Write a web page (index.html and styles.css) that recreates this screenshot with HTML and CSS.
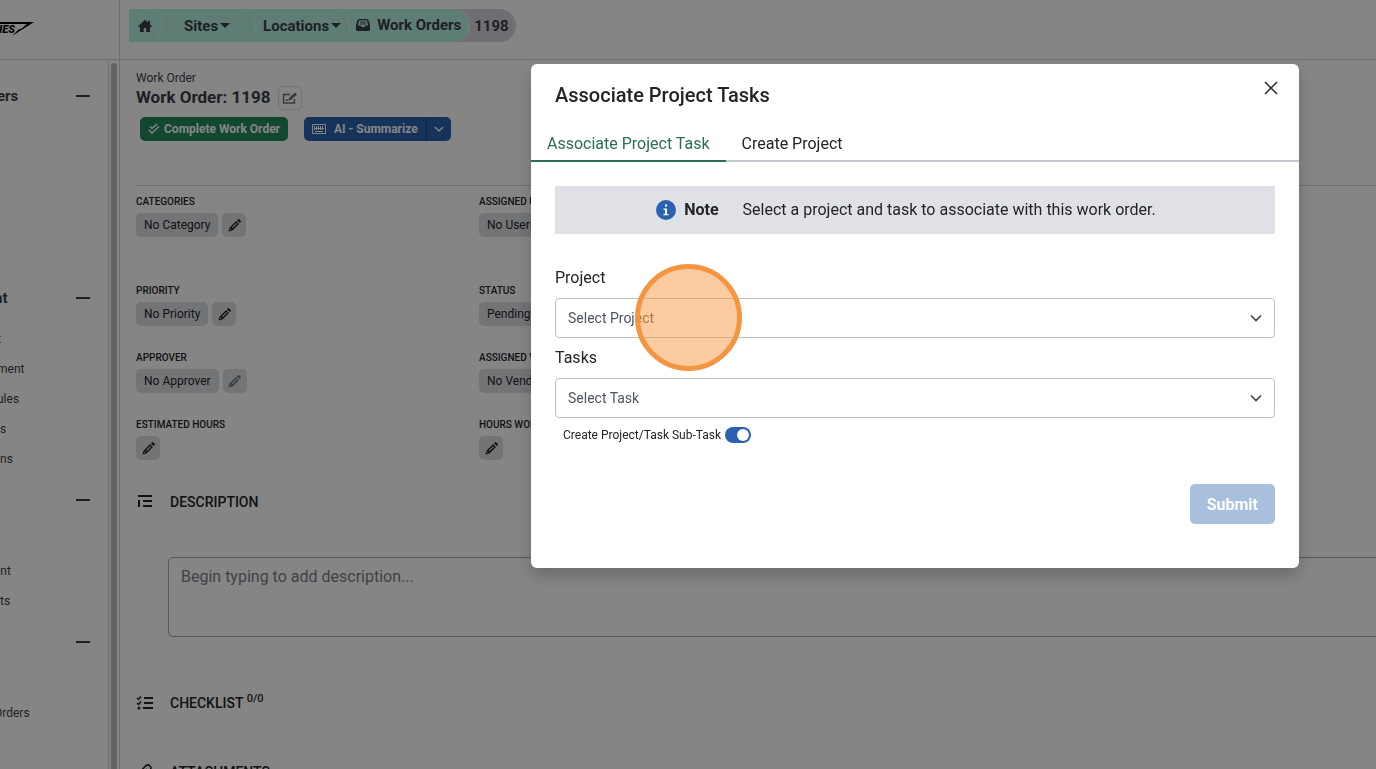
FILE: index.html
```html
<!DOCTYPE html>
<html lang="en">
<head>
  <meta charset="utf-8">
  <title>Work Order: 1198</title>
  <link rel="stylesheet" href="styles.css">
</head>
<body>
  <!-- shared icons -->
  <svg class="sprite" aria-hidden="true">
    <symbol id="pencil" viewBox="0 0 16 16">
      <path fill="currentColor" fill-rule="evenodd" d="M11 1.500l1.200-1.200a1 1 0 0 1 1.400 0l2.100 2.100a1 1 0 0 1 0 1.400L14.500 5zM10 2.500L13.500 6l-8 8L.5 15.500 2 10.500zM10.200 4.800L4.800 10.200l1 1 5.400-5.400zM3 11.800l-.7 1.900 1.900-.7z"/>
    </symbol>
    <symbol id="chevron" viewBox="0 0 12 12">
      <path fill="none" stroke="currentColor" stroke-width="1.600" d="M1 3.500l5 5 5-5"/>
    </symbol>
  </svg>

  <div class="app">
    <aside class="sidebar">
      <div class="logo">
        <svg width="36" height="18" viewBox="0 0 36 18">
          <path d="M0 2h34L12 16l7-7h2l6-5H0z"/>
          <text x="-8" y="13">RIES</text>
        </svg>
      </div>
      <div class="sidebar-body">
        <nav>
          <section>
            <div class="group-head"><h3 class="cut">ers</h3><button class="collapse" aria-label="Collapse"></button></div>
            <ul><li></li><li></li><li></li><li></li><li></li></ul>
          </section>
          <section>
            <div class="group-head"><h3 class="cut wide">nt</h3><button class="collapse" aria-label="Collapse"></button></div>
            <ul>
              <li><a href="#" class="cut">t</a></li>
              <li><a href="#" class="cut">ment</a></li>
              <li><a href="#" class="cut">ules</a></li>
              <li><a href="#">s</a></li>
              <li><a href="#">ns</a></li>
            </ul>
          </section>
          <section>
            <div class="group-head"><h3></h3><button class="collapse" aria-label="Collapse"></button></div>
            <ul>
              <li></li>
              <li><a href="#" class="cut wide">ent</a></li>
              <li><a href="#">ts</a></li>
            </ul>
          </section>
          <section>
            <div class="group-head"><h3></h3><button class="collapse" aria-label="Collapse"></button></div>
            <ul>
              <li></li>
              <li><a href="#" class="cut wide">Orders</a></li>
            </ul>
          </section>
        </nav>
        <div class="scrollbar"><div class="thumb"></div></div>
      </div>
    </aside>

    <div class="page">
      <header class="topbar">
        <nav class="breadcrumb">
          <a href="#" class="crumb home" aria-label="Home">
            <svg width="14" height="14" viewBox="0 0 14 14"><path fill="currentColor" d="M7 .8L0 7.200l1 1 1-.8V13h3.800V9h2.400v4H12V7.400l1 .8 1-1-2-1.900V1.800h-1.800v1.800z"/></svg>
          </a>
          <a href="#" class="crumb sites">Sites <span class="caret"></span></a>
          <a href="#" class="crumb locations">Locations <span class="caret"></span></a>
          <a href="#" class="crumb orders">
            <svg width="14" height="12" viewBox="0 0 14 12"><path fill="currentColor" fill-rule="evenodd" d="M3 0h8l1.500 1L14 6v5l-1 1H1l-1-1V6l1.500-5zM3.200 1.300L1.800 6.500H4.500L5.500 8h3l1-1.500h2.700l-1.400-5.200zM4.200 2.500h5.600v1H4.200zM3.800 4.500h6.400v1H3.800z"/></svg>
            Work Orders
          </a>
          <span class="crumb current">1198</span>
        </nav>
      </header>

      <main class="content">
        <div class="eyebrow">Work Order</div>
        <div class="title-row">
          <h1>Work Order: 1198</h1>
          <button class="edit-title" aria-label="Edit title">
            <svg width="16" height="14" viewBox="0 0 16 14"><path fill="none" stroke="currentColor" stroke-width="1.500" d="M8 3.500H1.500v8.500h11V8M3.500 9h3"/><path fill="currentColor" d="M6.500 9.500l.5-2.500L13 1.500l2 2L9 9z"/></svg>
          </button>
        </div>
        <div class="actions">
          <button class="btn complete">
            <svg width="12" height="12" viewBox="0 0 12 12"><path fill="none" stroke="currentColor" stroke-width="1.400" d="M2 3.500l2 2L9 1M1 7l3 3 7-6.500"/></svg>
            Complete Work Order
          </button>
          <div class="split">
            <button class="btn summarize">
              <svg width="14" height="10" viewBox="0 0 14 10"><path fill="none" stroke="currentColor" d="M.5.5h13v9H.5zM2.500 2v4M4.500 2v4M6.500 2v4M8.500 2v4M10.500 2v4M2 4.500h10M3 7.500h8"/></svg>
              AI - Summarize
            </button>
            <button class="btn more" aria-label="More actions"><svg width="10" height="10"><use href="#chevron"/></svg></button>
          </div>
        </div>

        <div class="fields">
          <div class="field tall">
            <h4>CATEGORIES</h4>
            <div class="chips"><span class="chip">No Category</span><button class="chip edit" aria-label="Edit categories"><svg width="13" height="13"><use href="#pencil"/></svg></button></div>
          </div>
          <div class="field tall">
            <h4>ASSIGNED USERS</h4>
            <div class="chips"><span class="chip">No Users</span></div>
          </div>
          <div class="field">
            <h4>PRIORITY</h4>
            <div class="chips"><span class="chip">No Priority</span><button class="chip edit" aria-label="Edit priority"><svg width="13" height="13"><use href="#pencil"/></svg></button></div>
          </div>
          <div class="field">
            <h4>STATUS</h4>
            <div class="chips"><span class="chip">Pending</span></div>
          </div>
          <div class="field">
            <h4>APPROVER</h4>
            <div class="chips"><span class="chip">No Approver</span><button class="chip edit muted" aria-label="Edit approver"><svg width="13" height="13"><use href="#pencil"/></svg></button></div>
          </div>
          <div class="field">
            <h4>ASSIGNED VENDOR</h4>
            <div class="chips"><span class="chip">No Vendor</span></div>
          </div>
          <div class="field">
            <h4>ESTIMATED HOURS</h4>
            <div class="chips"><button class="chip edit" aria-label="Edit estimated hours"><svg width="13" height="13"><use href="#pencil"/></svg></button></div>
          </div>
          <div class="field">
            <h4>HOURS WORKED</h4>
            <div class="chips"><button class="chip edit" aria-label="Edit hours worked"><svg width="13" height="13"><use href="#pencil"/></svg></button></div>
          </div>
        </div>

        <h2 class="section-title">
          <svg width="18" height="16" viewBox="0 0 18 16"><path fill="none" stroke="currentColor" stroke-width="2" d="M2 2h14M7 7h9M7 12h9M3 6v7"/></svg>
          <label for="description">DESCRIPTION</label>
        </h2>
        <textarea id="description" class="description" placeholder="Begin typing to add description..."></textarea>

        <h2 class="section-title">
          <svg width="18" height="16" viewBox="0 0 18 16"><path fill="none" stroke="currentColor" stroke-width="2" d="M8 3h9M8 8h9M7 13h10"/><path fill="none" stroke="currentColor" stroke-width="1.500" d="M1 3l1.500 1.500L5 1.500M1 8l1.500 1.500L5 6.500"/><circle fill="currentColor" cx="3" cy="13" r="1.500"/></svg>
          <span>CHECKLIST <sup>0/0</sup></span>
        </h2>
        <h2 class="section-title">
          <svg width="18" height="16" viewBox="0 0 18 16"><path fill="none" stroke="currentColor" stroke-width="1.600" d="M11 5L6 10.500a1.500 1.500 0 0 0 2 2L14 6a3 3 0 0 0-4.500-4L3.500 8.500a4.500 4.500 0 0 0 6 6"/></svg>
          <span>ATTACHMENTS</span>
        </h2>
      </main>
    </div>
  </div>

  <div class="backdrop">
    <div class="modal" role="dialog" aria-labelledby="modalTitle">
      <div class="modal-header">
        <h2 id="modalTitle">Associate Project Tasks</h2>
        <button class="close" aria-label="Close">
          <svg width="14" height="14" viewBox="0 0 14 14"><path fill="none" stroke="currentColor" stroke-width="1.500" d="M1 1l12 12M13 1L1 13"/></svg>
        </button>
      </div>
      <div class="tabs">
        <button class="tab active">Associate Project Task</button>
        <button class="tab">Create Project</button>
      </div>
      <form class="modal-body">
        <div class="note">
          <svg width="20" height="20" viewBox="0 0 20 20"><circle cx="10" cy="10" r="10" fill="#2b62b0"/><path fill="#fff" d="M9 4.500h2v2H9zM7.500 8.500H11V14h1.500v1.200h-5V14H9V9.700H7.500z"/></svg>
          <strong>Note</strong>
          <span>Select a project and task to associate with this work order.</span>
        </div>

        <label for="project">Project</label>
        <div class="select">
          <select id="project"><option>Select Project</option></select>
          <svg width="12" height="12"><use href="#chevron"/></svg>
          <div class="click-marker"></div>
        </div>

        <label for="task">Tasks</label>
        <div class="select">
          <select id="task"><option>Select Task</option></select>
          <svg width="12" height="12"><use href="#chevron"/></svg>
        </div>

        <div class="switch-row">
          <label for="subtask">Create Project/Task Sub-Task</label>
          <input type="checkbox" id="subtask" class="switch" checked>
        </div>

        <div class="modal-footer">
          <button type="submit" class="submit" disabled>Submit</button>
        </div>
      </form>
    </div>
  </div>
</body>
</html>
```
FILE: styles.css
```css
:root {
  --text: #212529;
  --page-text: #3c3f48;
  --green: #2c6e51;
  --blue: #2b62b0;
  --border: #c1c7cd;
  --chip: #dcdee2;
  --font: Roboto, "Liberation Sans", sans-serif;
}

* {
  margin: 0;
  padding: 0;
  box-sizing: border-box;
}

body {
  font-family: var(--font);
  font-size: 16px;
  line-height: 24px;
  color: var(--text);
  background: #fff;
  overflow: hidden;
}

button, select, textarea {
  font-family: inherit;
  color: inherit;
}

button {
  border: none;
  background: none;
  cursor: pointer;
}

a {
  color: inherit;
  text-decoration: none;
}

ul {
  list-style: none;
}

svg {
  display: block;
  flex: none;
}

.sprite {
  display: none;
}

.app {
  display: flex;
  height: 100vh;
  overflow: hidden;
}

/* Sidebar */
.sidebar {
  display: flex;
  flex-direction: column;
  width: 120px;
  flex: none;
  border-right: 1px solid #d2d4d8;
}

.logo {
  height: 60px;
  padding-top: 20px;
  border-bottom: 1px solid #d2d4d8;
}

.logo text {
  font-size: 11px;
  font-weight: 900;
  font-style: italic;
}

.sidebar-body {
  display: flex;
  flex: 1;
  color: var(--page-text);
  overflow: hidden;
}

.sidebar nav {
  flex: 1;
  padding-top: 10px;
  overflow: hidden;
}

.group-head {
  display: flex;
  align-items: center;
  justify-content: space-between;
  height: 52px;
  padding-right: 18px;
}

.group-head h3 {
  font-size: 15px;
  font-weight: 700;
}

.cut {
  margin-left: -3px;
}

.cut.wide {
  margin-left: -6px;
}

.collapse {
  width: 14px;
  height: 2px;
  background: var(--page-text);
}

.sidebar li {
  height: 30px;
  font-size: 12px;
  line-height: 30px;
}

.scrollbar {
  width: 11px;
  padding: 3px 2px 0;
  border-left: 1px solid #d2d4d8;
}

.thumb {
  width: 6px;
  height: 100%;
  border-radius: 3px 3px 0 0;
  background: #bdbdbd;
}

/* Top bar */
.page {
  flex: 1;
  min-width: 0;
}

.topbar {
  height: 60px;
  padding: 9px 9px 0;
  border-bottom: 1px solid #d2d4d8;
}

.breadcrumb {
  display: flex;
  font-size: 15px;
  font-weight: 700;
  color: var(--page-text);
}

.crumb {
  position: relative;
  display: flex;
  align-items: center;
  gap: 2px;
  height: 33px;
  margin-left: -18px;
  border-right: 2px solid #d0f5ea;
  border-radius: 0 17px 17px 0;
  background: #b2efe0;
  white-space: nowrap;
}

.home {
  z-index: 4;
  margin-left: 0;
  padding: 0 9px;
}

.sites {
  z-index: 3;
  padding: 0 24px 0 39px;
}

.locations {
  z-index: 2;
  padding: 0 8px 0 25px;
}

.orders {
  z-index: 1;
  gap: 7px;
  padding: 0 7px 2px 23px;
}

.current {
  padding: 0 7px 0 22px;
  border: none;
  background: #d3d4dc;
}

.caret {
  border: 5px solid transparent;
  border-top-color: currentColor;
  border-bottom: none;
}

/* Work order */
.content {
  padding: 10px 0 0 16px;
}

.eyebrow {
  font-size: 12px;
  line-height: 16px;
  color: var(--page-text);
}

.title-row {
  display: flex;
  align-items: center;
  gap: 7px;
  height: 23px;
}

.title-row h1 {
  font-size: 17px;
  font-weight: 700;
  line-height: 23px;
  color: var(--page-text);
}

.edit-title {
  display: grid;
  place-items: center;
  width: 24px;
  height: 24px;
  border: 1px solid #dcdee2;
  border-radius: 5px;
  color: #697077;
}

.actions {
  display: flex;
  gap: 16px;
  padding: 8px 4px 44px;
  border-bottom: 1px solid #cfd1d5;
}

.btn {
  display: flex;
  align-items: center;
  gap: 4px;
  height: 24px;
  padding: 0 8px;
  border-radius: 5px;
  font-size: 12px;
  font-weight: 700;
  color: #fff;
}

.complete {
  background: #248a5a;
}

.split {
  display: flex;
}

.summarize {
  gap: 8px;
  border-radius: 5px 0 0 5px;
  background: var(--blue);
}

.more {
  padding: 0 7px;
  border-left: 1px solid #1b4480;
  border-radius: 0 5px 5px 0;
  background: var(--blue);
}

.fields {
  display: grid;
  grid-template-columns: 343px 1fr;
  padding-top: 8px;
}

.field {
  height: 67px;
}

.field.tall {
  height: 89px;
}

.field h4 {
  margin-bottom: 3px;
  font-size: 10px;
  font-weight: 500;
  line-height: 16px;
}

.chips {
  display: flex;
  gap: 4px;
}

.chip {
  height: 24px;
  padding: 0 8px;
  border-radius: 5px;
  background: var(--chip);
  font-size: 12px;
}

.chip.edit {
  display: grid;
  place-items: center;
  width: 24px;
  padding: 0;
}

.chip.muted {
  color: #697077;
}

.section-title {
  display: flex;
  align-items: center;
  gap: 16px;
  height: 36px;
  font-size: 14px;
  font-weight: 500;
}

.section-title sup {
  font-size: 11px;
  line-height: 0;
}

.description {
  display: block;
  width: 100%;
  height: 80px;
  margin: 37px 0 31px 32px;
  padding: 7px 12px;
  border: 1px solid #a2a9b0;
  border-radius: 5px;
  background: none;
  font-size: 16px;
  line-height: 24px;
  resize: none;
}

.description::placeholder {
  color: #7b8088;
}

.description ~ .section-title {
  height: 69px;
}

/* Modal */
.backdrop {
  position: fixed;
  inset: 0;
  z-index: 10;
  display: flex;
  align-items: flex-start;
  justify-content: flex-end;
  padding: 64px 77px 0;
  background: rgba(0, 0, 0, 0.48);
}

.modal {
  width: 100%;
  max-width: 768px;
  border-radius: 6px;
  background: #fff;
  box-shadow: 0 8px 16px rgba(0, 0, 0, 0.2);
}

.modal-header {
  display: flex;
  justify-content: space-between;
  padding: 16px 21px 0 24px;
}

.modal-header h2 {
  font-size: 20px;
  font-weight: 500;
  line-height: 30px;
}

.close {
  width: 14px;
  height: 16px;
}

.tabs {
  display: flex;
  margin-top: 16px;
  border-bottom: 2px solid var(--border);
}

.tab {
  height: 36px;
  margin-bottom: -2px;
  padding: 0 16px;
  border-bottom: 2px solid transparent;
  font-size: 16px;
}

.tab.active {
  color: var(--green);
  border-bottom-color: var(--green);
}

.modal-body {
  padding: 24px 24px 44px;
}

.note {
  display: flex;
  align-items: center;
  justify-content: center;
  gap: 8px;
  height: 48px;
  margin-bottom: 32px;
  padding-right: 18px;
  background: #e0e1e6;
}

.note span {
  margin-left: 16px;
}

.modal-body label {
  display: block;
}

.select {
  position: relative;
  display: flex;
  align-items: center;
  margin: 8px 0;
}

.select select {
  width: 100%;
  height: 40px;
  padding: 0 12px;
  border: 1px solid #bcbec2;
  border-radius: 4px;
  background: #fff;
  font-size: 14px;
  color: #4d5562;
  appearance: none;
}

.select svg {
  position: absolute;
  right: 13px;
  color: #3f4650;
  pointer-events: none;
}

.click-marker {
  position: absolute;
  top: -34px;
  left: 80px;
  z-index: 1;
  width: 107px;
  height: 107px;
  border: 5px solid #f49542;
  border-radius: 50%;
  background: rgba(249, 151, 63, 0.5);
  pointer-events: none;
}

.switch-row {
  display: flex;
  align-items: center;
  gap: 4px;
  padding-left: 8px;
  font-size: 12px;
  line-height: 18px;
}

.switch {
  display: flex;
  width: 26px;
  height: 16px;
  padding: 2px;
  border-radius: 8px;
  background: var(--blue);
  appearance: none;
}

.switch::before {
  content: "";
  width: 12px;
  height: 12px;
  margin-left: auto;
  border-radius: 50%;
  background: #fff;
}

.modal-footer {
  display: flex;
  justify-content: flex-end;
  margin-top: 40px;
}

.submit {
  height: 40px;
  padding: 0 17px;
  border-radius: 5px;
  background: #a9bfde;
  font-size: 16px;
  font-weight: 700;
  color: #fff;
}
```
